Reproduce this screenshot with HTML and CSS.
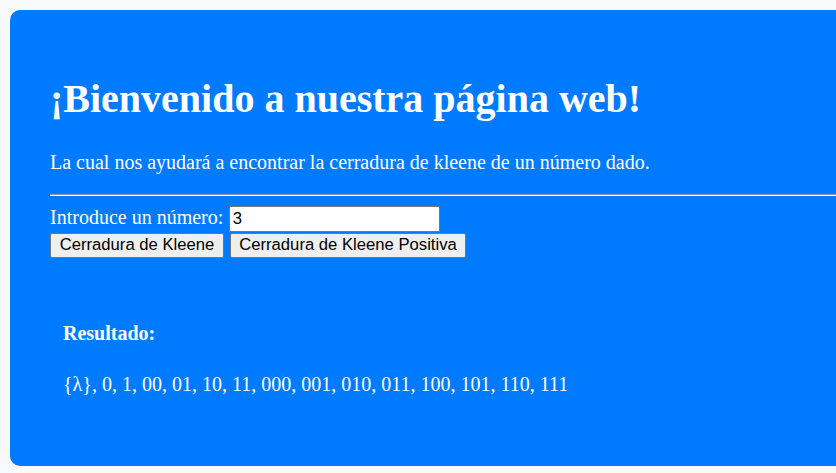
FILE: index.html
```html
<!DOCTYPE html>
<html lang="es">
<head>
<meta charset="utf-8">
<title>Cerradura de Kleene</title>
<link rel="stylesheet" href="styles.css">
</head>
<body>
<div class="container">
  <h1 class="title">¡Bienvenido a nuestra página web!</h1>
  <p class="intro">La cual nos ayudará a encontrar la cerradura de kleene de un número dado.</p>
  <hr class="divider">
  <form class="form">
    <div class="row">
      <label class="label" for="num">Introduce un número:</label>
      <input class="field" id="num" type="text" value="3">
    </div>
    <div class="buttons">
      <button class="btn" type="button">Cerradura de Kleene</button>
      <button class="btn" type="button">Cerradura de Kleene Positiva</button>
    </div>
  </form>
  <div class="result">
    <p class="result-title">Resultado:</p>
    <p class="result-text">{λ}, 0, 1, 00, 01, 10, 11, 000, 001, 010, 011, 100, 101, 110, 111</p>
  </div>
</div>
</body>
</html>
```
FILE: styles.css
```css
html, body {
  margin: 0;
  padding: 0;
  background: #f8f9fa;
}
body {
  padding: 10px 0 7px 10px;
  font-family: "Liberation Serif", "Times New Roman", serif;
  font-size: 20px;
  color: #fff;
}
.container {
  background: #007bff;
  border-radius: 10px 0 0 10px;
  padding: 40px 0 0 40px;
  height: 416px;
  box-sizing: content-box;
  overflow: hidden;
}
.title {
  font-size: 40px;
  line-height: 46px;
  margin: 26px 0 0 0;
  white-space: nowrap;
}
.intro {
  font-size: 20px;
  line-height: 23px;
  margin: 28.5px 0 0 0;
  white-space: nowrap;
}
.divider {
  margin: 20.3px 0 0 0;
  border: 0;
  border-top: 1px solid #8f9aa6;
  border-bottom: 1px solid #f2f6fb;
  height: 0;
}
.form {
  margin: 0;
}
.row {
  display: flex;
  align-items: baseline;
  gap: 5.5px;
  margin-top: 10.2px;
}
.label {
  font-size: 20px;
  line-height: 23px;
}
.field {
  box-sizing: border-box;
  width: 211px;
  height: 25.3px;
  margin: 0;
  padding: 0 3px;
  border: 1px solid #767676;
  border-radius: 0;
  background: #fff;
  color: #000;
  font-family: Arial, "Liberation Sans", sans-serif;
  font-size: 16.67px;
}
.buttons {
  display: flex;
  gap: 5.5px;
  margin-top: 1.3px;
}
.btn {
  box-sizing: border-box;
  height: 25px;
  margin: 0;
  padding: 0 8.7px;
  border: 1px solid #767676;
  border-radius: 2px;
  background: #efefef;
  color: #000;
  font-family: Arial, "Liberation Sans", sans-serif;
  font-size: 16.67px;
  line-height: 1;
}
.result {
  padding: 0 0 0 13px;
}
.result-title {
  font-weight: bold;
  font-size: 20px;
  line-height: 23px;
  margin: 64.45px 0 0 0;
}
.result-text {
  font-size: 20px;
  line-height: 23px;
  margin: 27.7px 0 0 0;
  white-space: nowrap;
}
```
